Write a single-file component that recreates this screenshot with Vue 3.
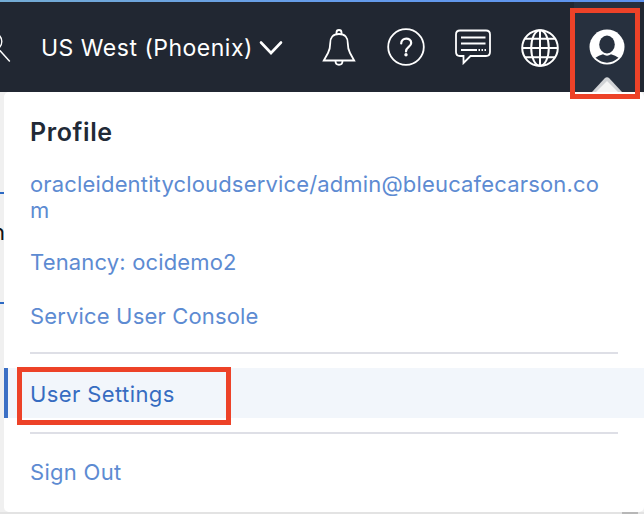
<script setup>
const account = 'oracleidentitycloudservice/admin@bleucafecarson.com'
</script>

<template>
  <div class="screen">
    <header class="topbar">
      <svg class="search" width="12" height="40" viewBox="0 0 12 40">
        <circle cx="-7" cy="9.500" r="8.8" />
        <path d="M-1 17.500L9.800 29.500" />
      </svg>
      <div class="region">
        <span class="region-name">US West (Phoenix)</span>
        <svg width="24" height="16" viewBox="0 0 24 16"><path d="M2 2.500L12 13L22 2.500" /></svg>
      </div>
      <nav class="tools">
        <svg width="40" height="44" viewBox="0 0 40 44">
          <path d="M4.800 34.500L9 27Q11.200 23 11.200 17.500C11 11.500 14 8 20 8S29 11.500 28.800 17.500Q28.800 23 31 27L35.200 34.500Z" />
          <path d="M17.500 8V6.500A2.500 2.500 0 0 1 22.500 6.500V8M16.500 35C16.500 40 23.500 40 23.500 35" />
        </svg>
        <svg width="40" height="44" viewBox="0 0 40 44">
          <circle cx="20" cy="21" r="17.800" />
          <path class="question" d="M15.200 17.500C15.200 11 25.200 11.200 25.200 17C25.200 21 20 21 20 25.500" />
          <circle class="dot" cx="20" cy="28.700" r="1.700" />
        </svg>
        <svg width="40" height="44" viewBox="0 0 40 44">
          <path d="M7 4.500H33Q37 4.500 37 8.500V26Q37 30 33 30H17.500L10.500 37V30H7Q3 30 3 26V8.500Q3 4.500 7 4.500Z" />
          <path d="M8 11.500H32.500M8 17.500H32.500M8 24H24M25.500 24H27M28.500 24H30M31.500 24H33" />
        </svg>
        <svg class="globe" width="40" height="44" viewBox="0 0 40 44">
          <circle cx="20" cy="22" r="17.800" />
          <ellipse cx="20" cy="22" rx="8.800" ry="17.800" />
          <path d="M20 4V40M2.500 22H37.500M5 12.700H35M5 31.300H35" />
        </svg>
      </nav>
      <div class="profile-button">
        <svg width="36" height="36" viewBox="0 0 36 36">
          <circle cx="18" cy="18" r="17.500" fill="#fff" />
          <ellipse cx="18" cy="15.500" rx="7.800" ry="9" fill="#27303e" />
          <path d="M6.500 28.800Q9.500 26.500 14 25.300Q18 28.200 22 25.300Q26.500 26.500 29.500 28.800Q18 38.500 6.500 28.800Z" fill="#27303e" />
        </svg>
        <svg class="pointer" width="30" height="15" viewBox="0 0 30 15">
          <path d="M0 15L12.500 1.500Q15 -.8 17.500 1.500L30 15Z" fill="#d1d3d6" />
          <path d="M4 15L15 4L26 15Z" fill="#f5f5f5" />
        </svg>
      </div>
    </header>

    <main class="body">
      <div class="page-edge"><span class="edge-text">n</span></div>
      <section class="menu">
        <h2>Profile</h2>
        <a class="link account">{{ account }}</a>
        <a class="link tenancy">Tenancy: ocidemo2</a>
        <a class="link">Service User Console</a>
        <hr>
        <a class="link selected">User Settings</a>
        <hr>
        <a class="link signout">Sign Out</a>
      </section>
    </main>
    <div class="footer-edge"><span></span></div>
    <div class="highlight highlight-avatar"></div>
    <div class="highlight highlight-settings"></div>
  </div>
</template>

<style>
body { margin: 0; }
</style>

<style scoped>
.screen {
  position: relative;
  width: 644px;
  height: 514px;
  overflow: hidden;
  background: #f0f0f0;
  font-family: Inter, "Liberation Sans", sans-serif;
  font-size: 22px;
  line-height: 26px;
}
.topbar {
  box-sizing: border-box;
  display: flex;
  height: 92px;
  padding-top: 2px;
  background: linear-gradient(90deg, #74acd4, #659cea 50%, #5c91ef) 0 0 / 100% 2px no-repeat, #212732;
}
svg { display: block; flex: none; fill: none; stroke: #fff; stroke-width: 1.8; }
.search { margin-top: 30px; stroke-width: 1.4; }
.region { display: flex; flex: none; align-items: center; box-sizing: border-box; width: 307px; padding: 2px 0 0 29px; color: #fff; }
.region-name { flex: none; width: 218px; font-size: 23px; letter-spacing: .5px; white-space: nowrap; }
.region svg { stroke-width: 2.6; stroke-linecap: round; }
.tools { display: flex; flex: none; box-sizing: border-box; gap: 27px; padding-top: 24px; width: 255px; }
.question { stroke-width: 2.2; stroke-linecap: round; }
.dot { fill: #fff; stroke: none; }
.globe { stroke-width: 2; }
.profile-button {
  display: flex;
  flex: none;
  flex-direction: column;
  justify-content: space-between;
  align-items: center;
  box-sizing: border-box;
  width: 66px;
  padding-top: 27px;
  background: #27303e;
}
.profile-button svg { stroke: none; }
.body { display: flex; height: 420px; }
.page-edge {
  box-sizing: border-box;
  display: flex;
  justify-content: flex-end;
  flex: none;
  width: 4px;
  height: 212px;
  padding-top: 127px;
  background: linear-gradient(#2d6ac4, #2d6ac4) 0 100px / 4px 2px no-repeat, linear-gradient(#2d6ac4, #2d6ac4) 0 210px / 4px 2px no-repeat;
}
.edge-text { color: #111; margin-right: -1px; }
.menu {
  display: flex;
  flex-direction: column;
  box-sizing: border-box;
  width: 640px;
  padding: 27px 26px 0;
  border-radius: 5px;
  background: #fff;
}
h2 { margin: 0 0 26px; color: #212936; font-size: 25px; line-height: 26px; font-weight: 600; letter-spacing: .6px; }
.link { color: #5d8bd2; letter-spacing: .16px; }
.account { width: 580px; margin-bottom: 26px; word-break: break-all; }
.tenancy { margin-bottom: 28px; }
hr { width: 588px; height: 2px; margin: 23px 0 14px; border: 0; background: #dedfe6; }
.selected {
  height: 50px;
  box-sizing: border-box;
  margin: 0 -26px;
  padding: 13px 22px 11px;
  border-left: 4px solid #3c70c5;
  background: #f2f6fb;
  color: #366cc1;
  letter-spacing: .4px;
}
.selected + hr { margin: 14px 0 25px; }
.signout { letter-spacing: .3px; }
.footer-edge { display: flex; height: 2px; background: #e3e3e3; }
.footer-edge span { width: 16px; margin-left: 622px; background: #b7b7b7; }
.highlight { position: absolute; box-sizing: border-box; border: 5px solid #ed4228; }
.highlight-avatar { left: 570px; top: 8px; width: 70px; height: 91px; }
.highlight-settings { left: 17px; top: 367px; width: 214px; height: 58px; }
</style>
